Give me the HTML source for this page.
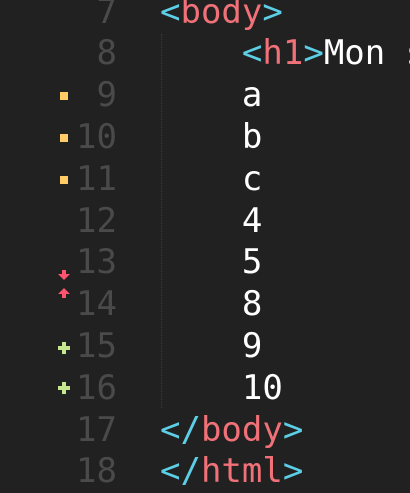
<!DOCTYPE html>
<html><head><style>
html,body{margin:0;padding:0;background:#212121;width:410px;height:482px;overflow:hidden}
.l{position:absolute;left:0;height:41.8px;line-height:41.8px;font-family:"DejaVu Sans Mono","Liberation Mono",monospace;font-size:34px;white-space:pre;width:410px}
.n{position:absolute;right:293px;color:#4a4a4a}
.c{position:absolute;left:160px;color:#fff}
.b{color:#5ccfe6}.t{color:#f07178}
.g{position:absolute;left:161px;top:34px;height:374px;border-left:1px dotted #3a3a3a}
.sq{position:absolute;left:60px;width:8px;height:8px;background:#ffcc66}
</style></head><body>
<div class="g"></div>
<div class="l" style="top:-8.5px"><span class="n">7</span><span class="c"><span class="b">&lt;</span><span class="t">body</span><span class="b">&gt;</span></span></div>
<div class="l" style="top:33.3px"><span class="n">8</span><span class="c">    <span class="b">&lt;</span><span class="t">h1</span><span class="b">&gt;</span>Mon s</span></div>
<div class="l" style="top:75.1px"><span class="n">9</span><span class="c">    a</span></div>
<div class="l" style="top:116.9px"><span class="n">10</span><span class="c">    b</span></div>
<div class="l" style="top:158.7px"><span class="n">11</span><span class="c">    c</span></div>
<div class="l" style="top:200.5px"><span class="n">12</span><span class="c">    4</span></div>
<div class="l" style="top:242.3px"><span class="n">13</span><span class="c">    5</span></div>
<div class="l" style="top:284.1px"><span class="n">14</span><span class="c">    8</span></div>
<div class="l" style="top:325.9px"><span class="n">15</span><span class="c">    9</span></div>
<div class="l" style="top:367.7px"><span class="n">16</span><span class="c">    10</span></div>
<div class="l" style="top:409.5px"><span class="n">17</span><span class="c"><span class="b">&lt;/</span><span class="t">body</span><span class="b">&gt;</span></span></div>
<div class="l" style="top:451.3px"><span class="n">18</span><span class="c"><span class="b">&lt;/</span><span class="t">html</span><span class="b">&gt;</span></span></div>
<div class="sq" style="top:92px"></div>
<div class="sq" style="top:134px"></div>
<div class="sq" style="top:176px"></div>
<svg style="position:absolute;left:0;top:0" width="410" height="482">
<path d="M62 270h4v4h4l-6 6l-6-6h4z" fill="#ff5370"/>
<path d="M64 288l6 6h-4v4h-4v-4h-4z" fill="#ff5370"/>
<path d="M62 342h4v4h4v4h-4v4h-4v-4h-4v-4h4z" fill="#c3e88d"/>
<path d="M62 382h4v4h4v4h-4v4h-4v-4h-4v-4h4z" fill="#c3e88d"/>
</svg>
</body></html>
